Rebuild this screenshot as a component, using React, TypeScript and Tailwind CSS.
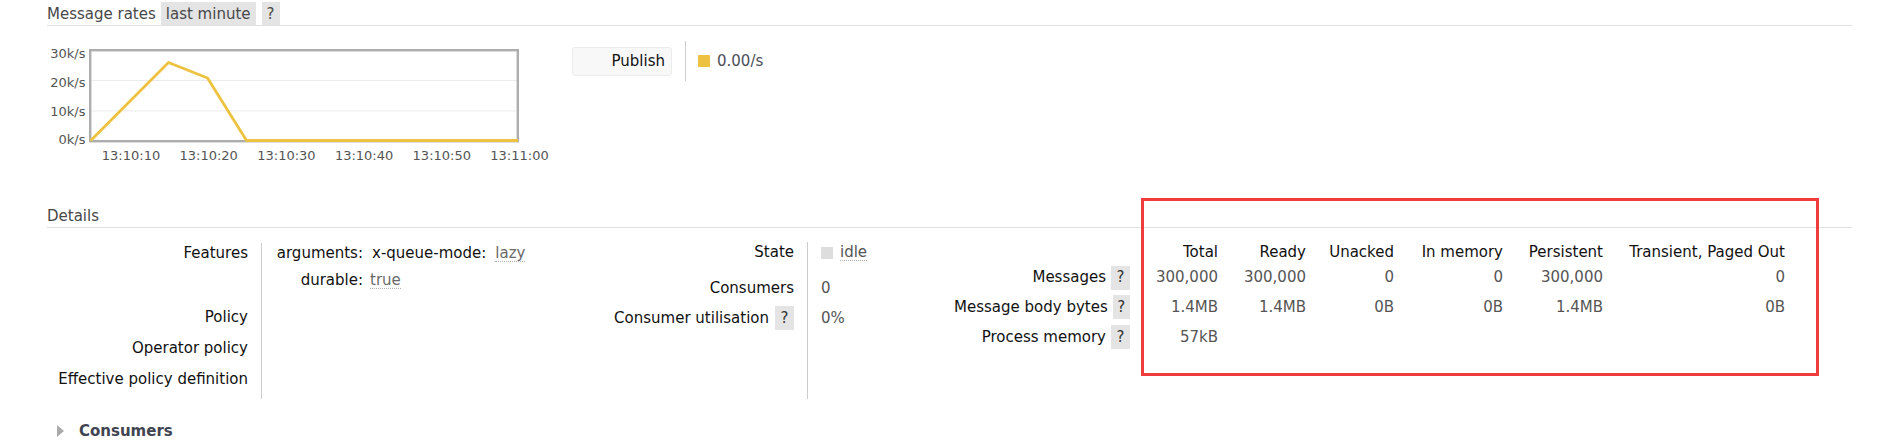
import React from "react";

function SectionHeader({ children }: { children: React.ReactNode }) {
  return (
    <div className="flex items-end h-[26px] border-b border-[#e0e0e0] text-[#484848]">
      {children}
    </div>
  );
}

function Help({ className = "" }: { className?: string }) {
  return (
    <span
      className={`inline-flex items-center justify-center w-[19px] h-[24px] bg-[#e4e4e4] text-[#333] ${className}`}
    >
      ?
    </span>
  );
}

function Chart() {
  const xLabels = ["13:10:10", "13:10:20", "13:10:30", "13:10:40", "13:10:50", "13:11:00"];
  const yLabels = [
    { t: "30k/s", y: 27 },
    { t: "20k/s", y: 56 },
    { t: "10k/s", y: 85 },
    { t: "0k/s", y: 113.5 },
  ];
  return (
    <svg width={513} height={150} className="block shrink-0">
      <line x1={44.4} x2={470.6} y1={54.5} y2={54.5} stroke="#ebebeb" strokeWidth={1} />
      <line x1={44.4} x2={470.6} y1={84.9} y2={84.9} stroke="#ebebeb" strokeWidth={1} />
      <rect x={43.2} y={24.2} width={427.6} height={91} fill="none" stroke="#adadad" strokeWidth={2.4} />
      <polyline
        points="43.5,114.8 121.5,36.5 160.5,52 199.5,114.5 471,114.5"
        fill="none"
        stroke="#edc240"
        strokeWidth={2.8}
        strokeLinejoin="round"
      />
      {yLabels.map((l) => (
        <text
          key={l.t}
          x={38.5}
          y={l.y}
          dy="0.36em"
          textAnchor="end"
          fontSize={13}
          fill="#545454"
          fontFamily="'DejaVu Sans', Verdana, sans-serif"
        >
          {l.t}
        </text>
      ))}
      {xLabels.map((t, i) => (
        <text
          key={t}
          x={84 + 77.7 * i}
          y={129}
          dy="0.36em"
          textAnchor="middle"
          fontSize={13}
          fill="#545454"
          fontFamily="'DejaVu Sans', Verdana, sans-serif"
        >
          {t}
        </text>
      ))}
    </svg>
  );
}

export default function App() {
  const cols = [
    { h: "Total", w: "w-[88px]", v: ["300,000", "1.4MB", "57kB"] },
    { h: "Ready", w: "w-[88px]", v: ["300,000", "1.4MB", ""] },
    { h: "Unacked", w: "w-[88px]", v: ["0", "0B", ""] },
    { h: "In memory", w: "w-[109px]", v: ["0", "0B", ""] },
    { h: "Persistent", w: "w-[100px]", v: ["300,000", "1.4MB", ""] },
    { h: "Transient, Paged Out", w: "w-[182px]", v: ["0", "0B", ""] },
  ];
  const rowLabels = [
    { t: "Messages", h: "h-[29px]" },
    { t: "Message body bytes", h: "h-[30px]" },
    { t: "Process memory", h: "h-[30px]" },
  ];

  return (
    <div className="relative w-[1891px] h-[444px] bg-white overflow-hidden font-['DejaVu_Sans',Verdana,sans-serif] text-[15px] text-[#484848] leading-[17px]">
      <div className="ml-[47px] w-[1805px]">
        {/* Message rates */}
        <SectionHeader>
          <span className="pb-[2px]">Message rates</span>
          <span className="ml-[5px] px-[5px] pt-[4px] pb-[2px] bg-[#e4e4e4]">last minute</span>
          <span className="ml-[6px] px-[5px] pt-[4px] pb-[2px] bg-[#e4e4e4]">?</span>
        </SectionHeader>

        <div className="flex items-start h-[176px]">
          <Chart />
          <div className="ml-[12px] mt-[15px] flex items-center h-[40px]">
            <div className="w-[100px] h-[29px] flex items-center justify-end pr-[6px] bg-[#f8f8f8] border border-[#ececec] rounded-[3px] text-[#111]">
              Publish
            </div>
            <div className="ml-[13px] w-px h-[40px] bg-[#cfcfcf]" />
            <div className="ml-[12px] w-[12px] h-[12px] bg-[#edc240]" />
            <span className="ml-[7px] text-[#4a4f58]">0.00/s</span>
          </div>
        </div>

        {/* Details */}
        <SectionHeader>
          <span className="pb-[2px]">Details</span>
        </SectionHeader>

        <div className="flex">
          {/* Left table */}
          <div className="flex w-[553px] pt-[15px]">
            <div className="w-[214px] pr-[13px] pb-[4px] text-right text-[#111]">
              <div className="h-[59px]">
                <div className="h-[20px] flex items-center justify-end">Features</div>
              </div>
              <div className="h-[31px] flex items-center justify-end">Policy</div>
              <div className="h-[31px] flex items-center justify-end">Operator policy</div>
              <div className="h-[31px] flex items-center justify-end whitespace-nowrap">Effective policy definition</div>
            </div>
            <div className="flex-1 border-l border-[#cccccc] pl-[14px]">
              <div className="h-[20px] flex items-center whitespace-nowrap">
                <span className="w-[87px] text-right text-[#111]">arguments:</span>
                <span className="ml-[9px] text-[#111]">x-queue-mode:</span>
                <span className="ml-[9px] text-[#6a6a6a] border-b border-dotted border-[#b0b0b0] leading-[16px]">lazy</span>
              </div>
              <div className="mt-[7px] h-[20px] flex items-center">
                <span className="w-[87px] text-right text-[#111]">durable:</span>
                <span className="ml-[7px] text-[#6a6a6a] border-b border-dotted border-[#b0b0b0] leading-[16px]">true</span>
              </div>
            </div>
          </div>

          {/* Middle table */}
          <div className="flex w-[354px] pt-[14px]">
            <div className="w-[207px] pr-[13px] pb-[6px] text-right text-[#111] whitespace-nowrap">
              <div className="h-[31px]">
                <div className="h-[21px] flex items-center justify-end">State</div>
              </div>
              <div className="h-[30px] flex items-center justify-end">Consumers</div>
              <div className="h-[30px] flex items-center justify-end">
                Consumer utilisation
                <Help className="ml-[6px] w-[18px]" />
              </div>
            </div>
            <div className="flex-1 border-l border-[#cccccc] pl-[13px]">
              <div className="h-[31px]">
                <div className="h-[21px] flex items-center">
                  <span className="w-[12px] h-[12px] bg-[#dddddd]" />
                  <span className="ml-[7px] text-[#555] border-b border-dotted border-[#b0b0b0] leading-[16px]">idle</span>
                </div>
              </div>
              <div className="h-[30px] flex items-center text-[#555]">0</div>
              <div className="h-[30px] flex items-center text-[#555]">0%</div>
            </div>
          </div>

          {/* Right table */}
          <div className="pt-[14px] whitespace-nowrap">
            <div className="flex h-[21px] items-center text-[#111]">
              <div className="w-[176px]" />
              {cols.map((c) => (
                <div key={c.h} className={`${c.w} text-right`}>
                  {c.h}
                </div>
              ))}
            </div>
            {rowLabels.map((r, ri) => (
              <div key={r.t} className={`flex ${r.h} items-center`}>
                <div className="w-[176px] flex items-center justify-end text-[#111]">
                  {r.t}
                  <Help className="ml-[5px]" />
                </div>
                {cols.map((c) => (
                  <div key={c.h} className={`${c.w} text-right text-[#555]`}>
                    {c.v[ri]}
                  </div>
                ))}
              </div>
            ))}
          </div>
        </div>

        {/* Consumers */}
        <div className="mt-[22px] flex items-center h-[20px]">
          <svg width={7} height={12} className="ml-[10px] block">
            <polygon points="0,0 7,6 0,12" fill="#aaaaaa" />
          </svg>
          <span className="ml-[15px] font-bold text-[#3f4450]">Consumers</span>
        </div>
      </div>

      {/* Highlight annotation */}
      <div className="absolute left-[1141px] top-[198px] w-[678px] h-[178px] border-[3px] border-[#f03c3c] pointer-events-none" />
    </div>
  );
}
